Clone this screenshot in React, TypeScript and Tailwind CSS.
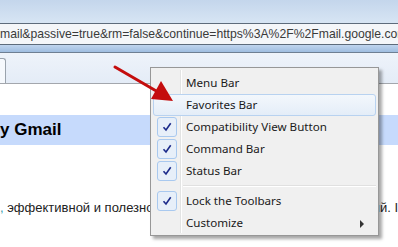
type Item = { label: string; checked?: boolean; hover?: boolean; submenu?: boolean };

const groupA: Item[] = [
  { label: "Menu Bar" },
  { label: "Favorites Bar", hover: true },
  { label: "Compatibility View Button", checked: true },
  { label: "Command Bar", checked: true },
  { label: "Status Bar", checked: true },
];

const groupB: Item[] = [
  { label: "Lock the Toolbars", checked: true },
  { label: "Customize", submenu: true },
];

function Check() {
  return (
    <svg width="10" height="10" viewBox="0 0 10 10">
      <path d="M1.5 5.2 L4 8 L8.7 1.2" fill="none" stroke="#1b2a8a" strokeWidth="1.6" />
    </svg>
  );
}

function MenuRow({ item }: { item: Item }) {
  return (
    <div
      className={
        "relative flex h-[22px] items-center rounded-[3px] border " +
        (item.hover
          ? "border-[#b8d2f0] bg-gradient-to-b from-[#f3f7fc] to-[#e4edf8]"
          : "border-transparent")
      }
    >
      <div className="flex w-[26px] justify-center">
        {item.checked && (
          <div className="flex h-[20px] w-[20px] items-center justify-center rounded-[3px] border border-[#a9c9ef] bg-[#e7eff9]">
            <Check />
          </div>
        )}
      </div>
      <span className="pl-[6px] text-[11.6px] text-[#1a1a1a]">{item.label}</span>
      {item.submenu && (
        <svg className="absolute right-[10px] top-[7px]" width="5" height="8" viewBox="0 0 5 8">
          <path d="M0 0 L4 4 L0 8 Z" fill="#333" />
        </svg>
      )}
    </div>
  );
}

export default function App() {
  return (
    <div className="relative h-[247px] w-[398px] overflow-hidden bg-white font-['Noto_Sans',sans-serif]">
      {/* window frame */}
      <div className="h-[23px] bg-gradient-to-b from-[#c4d6ec] to-[#d7e5f4]" />
      <div className="flex h-[22px] items-center overflow-hidden whitespace-nowrap border-y border-[#5d6b7b] bg-[#f4f6f9] font-['Liberation_Sans',sans-serif] text-[12.2px] text-[#3a3a3a]">
        mail&amp;passive=true&amp;rm=false&amp;continue=https%3A%2F%2Fmail.google.com
      </div>
      <div className="h-[7px] bg-gradient-to-b from-[#c0d5ee] to-[#9fbde0]" />
      <div className="h-[1px] bg-[#6e7f93]" />
      <div className="flex h-[31px] items-end border-b border-[#a3a7ad] bg-gradient-to-b from-[#eef3fa] to-[#e4ecf7]">
        <div className="h-[25px] w-[6px] rounded-tr-[3px] border-r border-t border-[#9aa3ad] bg-[#f6f9fd]" />
      </div>

      {/* page */}
      <div className="font-['Liberation_Sans',sans-serif]">
        <div className="h-[31px]" />
        <div className="flex h-[30px] items-center bg-[#c6dafc] text-[17px] font-bold text-black">
          y Gmail
        </div>
        <div className="h-[53px]" />
        <div className="flex items-center justify-between whitespace-nowrap text-[13px] text-[#222]">
          <span>
            <span className="text-[#39a]">,</span> эффективной и полезно
          </span>
          <span>ый. I</span>
        </div>
      </div>

      {/* context menu */}
      <div className="absolute left-[150px] top-[67px] w-[229px] border border-[#979797] bg-[#f0f0f0] px-[2px] pb-[1px] pt-[4px] shadow-[3px_3px_3px_rgba(0,0,0,0.35)]">
        <div className="pointer-events-none absolute bottom-[2px] left-[29px] top-[2px] w-[2px] border-l border-r border-l-[#e2e3e3] border-r-white" />
        {groupA.map((it) => (
          <MenuRow key={it.label} item={it} />
        ))}
        <div className="my-[3px] ml-[30px] h-[2px] border-b border-t border-b-white border-t-[#e0e0e0]" />
        {groupB.map((it) => (
          <MenuRow key={it.label} item={it} />
        ))}
      </div>

      {/* red arrow over the menu */}
      <svg className="absolute left-[100px] top-[55px]" width="80" height="60" viewBox="0 0 80 60">
        <path d="M15 12 L58 37" stroke="#c40d0d" strokeWidth="3" strokeLinecap="round" />
        <path d="M51 44 L73 46 L61 26 Z" fill="#c40d0d" />
      </svg>
    </div>
  );
}
